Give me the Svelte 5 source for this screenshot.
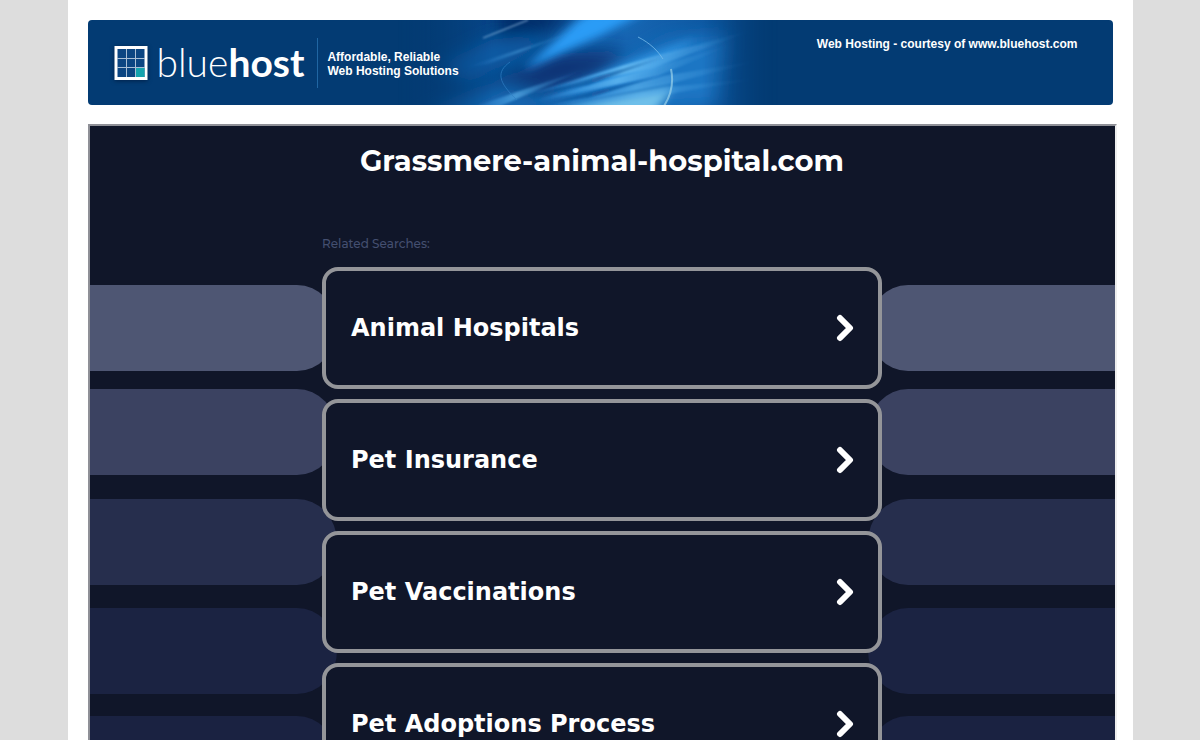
<script lang="ts">
	const domain = 'Grassmere-animal-hospital.com';

	const searches = [
		'Animal Hospitals',
		'Pet Insurance',
		'Pet Vaccinations',
		'Pet Adoptions Process'
	];

	const stripes = [
		{ y: 159, color: '#4e5673' },
		{ y: 263, color: '#3b4261' },
		{ y: 373, color: '#262e4d' },
		{ y: 482, color: '#1b2342' },
		{ y: 590, color: '#1a2241' }
	];
</script>

<div class="page">
	<header class="banner">
		<svg class="glow" viewBox="0 0 380 85" aria-hidden="true">
			<defs>
				<filter id="soft" x="-50%" y="-100%" width="200%" height="300%">
					<feGaussianBlur stdDeviation="9" />
				</filter>
				<filter id="mid" x="-50%" y="-100%" width="200%" height="300%">
					<feGaussianBlur stdDeviation="4" />
				</filter>
				<filter id="fine" x="-50%" y="-100%" width="200%" height="300%">
					<feGaussianBlur stdDeviation="1" />
				</filter>
				<linearGradient id="ray">
					<stop offset="0" stop-color="#2a8fe6" stop-opacity="0" />
					<stop offset="0.45" stop-color="#62b9f2" />
					<stop offset="1" stop-color="#2f86d0" stop-opacity="0" />
				</linearGradient>
				<linearGradient id="shade">
					<stop offset="0" stop-color="#0b4c94" stop-opacity="0" />
					<stop offset="0.5" stop-color="#0b4c94" stop-opacity="0.7" />
					<stop offset="1" stop-color="#0b4c94" stop-opacity="0" />
				</linearGradient>
				<linearGradient id="base">
					<stop offset="0" stop-color="#033b73" />
					<stop offset="0.25" stop-color="#07478a" />
					<stop offset="0.6" stop-color="#1666b3" />
					<stop offset="0.85" stop-color="#0c559e" />
					<stop offset="1" stop-color="#033b73" />
				</linearGradient>
				<linearGradient id="edge">
					<stop offset="0" stop-color="#fff" stop-opacity="0" />
					<stop offset="0.25" stop-color="#fff" />
					<stop offset="0.8" stop-color="#fff" />
					<stop offset="1" stop-color="#fff" stop-opacity="0" />
				</linearGradient>
				<mask id="fade">
					<rect width="380" height="85" fill="url(#edge)" />
				</mask>
			</defs>
			<g mask="url(#fade)">
				<rect width="380" height="85" fill="url(#base)" />
				<g filter="url(#soft)">
					<path d="M40 45 110 12l40 10-80 40z" fill="#0f5ba5" />
					<path d="M20 95 110 65l80 30z" fill="#1769b4" />
					<path d="M100-12h80l-30 24-50 8z" fill="#042b66" />
					<path d="M95 65 160 34l70-4-30 24-60 16z" fill="#0a3273" />
					<path d="M150 95 270 20l60-5-10 70z" fill="#1f76c4" />
				</g>
				<g filter="url(#mid)">
					<path d="M125 50 180 0l12-8h55l-45 24z" fill="#2a9cf6" />
					<path d="M140 82 240 38l60-20-50 38z" fill="#2f92e0" />
					<path d="M150 92 235 74l40-6-20 26z" fill="#6fc0ea" />
				</g>
				<g filter="url(#fine)" fill="url(#ray)">
					<path d="M120 77 250 38l105-28-100 38z" />
					<path d="M125 84 260 46l75-22-75 32z" opacity="0.8" />
					<path d="M135 90 265 56l100-16-95 24z" opacity="0.6" />
					<path d="M145 90 270 67l95-9-95 16z" opacity="0.5" />
					<path d="M60 92 190 48 100 87z" opacity="0.6" />
					<path d="M65 48 190 7 90 44z" opacity="0.4" />
				</g>
				<g filter="url(#fine)" fill="url(#shade)">
					<path d="M130 77 275 34 190 65z" />
					<path d="M135 86 270 54 190 78z" />
				</g>
				<path d="M85 18 130 0" filter="url(#fine)" stroke="#a5cdf0" opacity="0.9" />
				<path d="M112 42c-14 10-12 20 7 38" fill="none" stroke="#2f7fc4" opacity="0.7" />
				<path d="M240 17c12 6 20 14 25 22" fill="none" stroke="#79bdec" opacity="0.8" />
				<path d="M273 49c3 14 0 26-7 37" fill="none" stroke="#9ad2ea" stroke-width="2" opacity="0.7" />
			</g>
		</svg>
		<a class="logo" href="#bluehost" aria-label="bluehost">
			<svg class="mark" viewBox="0 0 34 34" aria-hidden="true">
				<rect x="2" y="1.5" width="30" height="31" fill="#0b4582" stroke="#fff" stroke-width="3" />
				<rect x="22" y="22" width="8.5" height="9" fill="#14a3ae" />
				<path d="M12.5 3v28M21.5 3v28M3 12.5h28M3 21.5h28" stroke="#a9bfd6" />
			</svg>
			<span class="name">blue<b>host</b></span>
		</a>
		<p class="tagline">Affordable, Reliable<br />Web Hosting Solutions</p>
		<a class="courtesy" href="#hosting">Web Hosting - courtesy of www.bluehost.com</a>
	</header>

	<main class="frame">
		<svg class="stripes" viewBox="0 0 1025 676" preserveAspectRatio="xMidYMin slice" aria-hidden="true">
			{#each stripes as stripe}
				<rect x="-900" y={stripe.y} width="1147" height="86" rx="40" ry="43" fill={stripe.color} />
				<rect x="778" y={stripe.y} width="1147" height="86" rx="40" ry="43" fill={stripe.color} />
			{/each}
		</svg>
		<h1>{domain}</h1>
		<section class="related">
			<h2>Related Searches:</h2>
			<ul>
				{#each searches as search}
					<li>
						<a class="card" href="#search">
							<span>{search}</span>
							<svg class="arrow" viewBox="0 0 18 28" aria-hidden="true">
								<path d="M4 4l10 10L4 24" />
							</svg>
						</a>
					</li>
				{/each}
			</ul>
		</section>
	</main>
</div>

<style>
	:global(body) {
		background: #ddd;
		font-family: 'Liberation Sans', Arial, sans-serif;
	}

	.page {
		box-sizing: border-box;
		display: flex;
		flex-direction: column;
		gap: 19px;
		max-width: 1065px;
		min-height: 100vh;
		margin: 0 auto;
		padding: 20px 20px 0;
		background: #fff;
	}

	a {
		color: #fff;
		text-decoration: none;
	}

	.banner {
		position: relative;
		display: flex;
		align-items: center;
		height: 85px;
		padding: 0 35px 0 26px;
		box-sizing: border-box;
		border-radius: 4px;
		background: #033b73;
		color: #fff;
		font-size: 12px;
		line-height: 14px;
		font-weight: bold;
		overflow: hidden;
	}

	.glow {
		position: absolute;
		top: 0;
		left: 310px;
		width: 380px;
		height: 85px;
	}

	.logo {
		display: flex;
		align-items: center;
		gap: 9px;
		padding-right: 13px;
	}

	.mark {
		width: 34px;
		height: 34px;
		filter: drop-shadow(0 1px 2px #012149);
	}

	.name {
		font-family: Lato, sans-serif;
		font-size: 39px;
		line-height: 48px;
		padding-bottom: 2px;
		font-weight: 300;
	}

	.name b {
		font-weight: 700;
	}

	.tagline {
		position: relative;
		margin: 0;
		padding: 12px 9px 10px;
		border-left: 1px solid #2066a3;
	}

	.courtesy {
		position: relative;
		align-self: flex-start;
		margin-left: auto;
		padding-top: 17px;
	}

	.frame {
		position: relative;
		flex: 1;
		margin-right: -4px;
		border: 2px solid;
		border-color: #8f9097 #eee #eee #8f9097;
		background: #101629;
		color: #fff;
		overflow: hidden;
	}

	.stripes {
		position: absolute;
		top: 0;
		left: 0;
		width: 100%;
		height: 676px;
	}

	h1 {
		position: relative;
		margin: 0;
		padding: 15px 0 55px;
		font-family: Montserrat, sans-serif;
		font-size: 29px;
		line-height: 40px;
		font-weight: 700;
		text-align: center;
	}

	.related {
		position: relative;
		max-width: 560px;
		margin: 0 auto;
	}

	h2 {
		margin: 0;
		padding-bottom: 15px;
		color: #444f70;
		font-family: Montserrat, sans-serif;
		font-size: 12px;
		line-height: 16px;
		font-weight: 500;
	}

	ul {
		display: flex;
		flex-direction: column;
		gap: 10px;
		margin: 0;
		padding: 0;
		list-style: none;
	}

	.card {
		display: flex;
		align-items: center;
		justify-content: space-between;
		box-sizing: border-box;
		height: 122px;
		padding: 0 24px 0 25px;
		border: 4px solid #949599;
		border-radius: 16px;
		background: #101629;
		font-family: Verdana, 'DejaVu Sans', sans-serif;
		font-size: 24px;
		line-height: 32px;
		font-weight: 700;
	}

	.arrow {
		width: 18px;
		height: 28px;
		fill: none;
		stroke: #fff;
		stroke-width: 6;
		stroke-linecap: round;
		stroke-linejoin: round;
	}
</style>
